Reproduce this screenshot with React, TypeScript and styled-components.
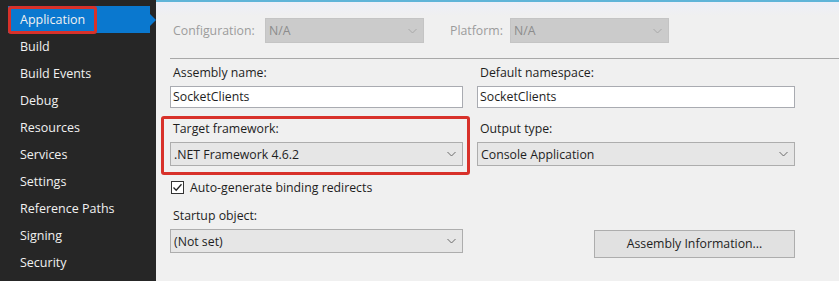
import React from "react";
import styled, { createGlobalStyle } from "styled-components";

const Global = createGlobalStyle`
  html, body { margin: 0; padding: 0; background: #f0f0f0; }
  body { font-family: "Open Sans", "Noto Sans", sans-serif; font-size: 12.3px; color: #1e1e1e; }
  * { box-sizing: border-box; }
`;

const Shell = styled.div`
  display: flex;
  width: 839px;
  height: 281px;
  overflow: hidden;
`;

const Sidebar = styled.nav`
  width: 156px;
  flex: none;
  background: #262626;
  padding: 6px 6px 0 8px;
  display: flex;
  flex-direction: column;
`;

const NavItem = styled.div<{ $active?: boolean }>`
  position: relative;
  height: 27px;
  line-height: 27px;
  padding-left: 12px;
  color: #f1f1f1;
  font-size: 12.5px;
  background: ${(p) => (p.$active ? "#0a78cf" : "transparent")};
  ${(p) =>
    p.$active &&
    `
    &::after {
      content: "";
      position: absolute;
      right: -6px;
      top: 8px;
      border-left: 6px solid #0a78cf;
      border-top: 6px solid transparent;
      border-bottom: 6px solid transparent;
    }
  `}
`;

const Highlight = styled.span<{ $w: number; $h: number; $t: number; $l: number }>`
  position: absolute;
  top: ${(p) => p.$t}px;
  left: ${(p) => p.$l}px;
  width: ${(p) => p.$w}px;
  height: ${(p) => p.$h}px;
  border: 3px solid #d8312a;
  border-radius: 3px;
  pointer-events: none;
`;

const Main = styled.main`
  flex: 1;
  border-top: 2px solid #5fb4d8;
  background: linear-gradient(#eceef8, #f0f0f0 14px);
  display: flex;
  flex-direction: column;
`;

const ConfigBar = styled.div`
  display: flex;
  align-items: center;
  padding: 16px 0 0 14px;
  height: 41px;
`;

const ConfigLabel = styled.span<{ $w: number; $ml?: number }>`
  width: ${(p) => p.$w}px;
  margin-left: ${(p) => p.$ml ?? 0}px;
  padding-left: 3px;
  color: #9c9c9c;
`;

const Separator = styled.div`
  margin: 15px 0 0 14px;
  height: 1px;
  background: #a8a8a8;
`;

const Form = styled.div`
  display: grid;
  grid-template-columns: 293px 318px;
  column-gap: 14px;
  row-gap: 13px;
  padding: 6px 0 0 14px;
`;

const Field = styled.div`
  position: relative;
  display: flex;
  flex-direction: column;
`;

const Label = styled.label`
  height: 16px;
  line-height: 16px;
  padding-left: 3px;
  margin-bottom: 5px;
  color: #1e1e1e;
`;

const TextInput = styled.div`
  height: 22px;
  line-height: 20px;
  background: #ffffff;
  border: 1px solid #a9abb1;
  padding-left: 2px;
`;

const SelectBox = styled.div<{ $disabled?: boolean; $w?: number }>`
  display: flex;
  align-items: center;
  justify-content: space-between;
  height: ${(p) => (p.$disabled ? 25 : 24)}px;
  width: ${(p) => (p.$w ? `${p.$w}px` : "auto")};
  padding: 0 6px 0 3px;
  background: ${(p) => (p.$disabled ? "#cbcbcb" : "#e6e6e6")};
  border: 1px solid ${(p) => (p.$disabled ? "#c4c4c4" : "#adadad")};
  color: ${(p) => (p.$disabled ? "#8c8c8c" : "#1e1e1e")};
`;

const CheckRow = styled.div`
  display: flex;
  align-items: center;
  height: 16px;
  padding-left: 1px;
  gap: 6px;
`;

const CheckBox = styled.span`
  width: 13px;
  height: 13px;
  border: 1px solid #333333;
  background: #ffffff;
  display: flex;
  align-items: center;
  justify-content: center;
`;

const ButtonCell = styled.div`
  display: flex;
  justify-content: flex-end;
  padding-top: 22px;
`;

const Button = styled.div`
  width: 201px;
  height: 28px;
  line-height: 26px;
  text-align: center;
  background: #e1e1e1;
  border: 1px solid #adadad;
`;

const Chevron = ({ color = "#6a6a6a" }: { color?: string }) => (
  <svg width="9" height="6" viewBox="0 0 9 6">
    <path d="M0.5 1 L4.5 5 L8.5 1" fill="none" stroke={color} strokeWidth="1" />
  </svg>
);

const Select = ({ value, disabled, w }: { value: string; disabled?: boolean; w?: number }) => (
  <SelectBox $disabled={disabled} $w={w}>
    <span>{value}</span>
    <Chevron color={disabled ? "#a8a8a8" : "#6a6a6a"} />
  </SelectBox>
);

const navItems = [
  "Application",
  "Build",
  "Build Events",
  "Debug",
  "Resources",
  "Services",
  "Settings",
  "Reference Paths",
  "Signing",
  "Security",
];

export default function App() {
  return (
    <>
      <Global />
      <Shell>
        <Sidebar>
          {navItems.map((n, i) => (
            <NavItem key={n} $active={i === 0}>
              {n}
              {i === 0 && <Highlight $t={0} $l={0} $w={89} $h={28} />}
            </NavItem>
          ))}
        </Sidebar>
        <Main>
          <ConfigBar>
            <ConfigLabel $w={95}>Configuration:</ConfigLabel>
            <Select value="N/A" disabled w={159} />
            <ConfigLabel $w={63} $ml={23}>Platform:</ConfigLabel>
            <Select value="N/A" disabled w={159} />
          </ConfigBar>
          <Separator />
          <Form>
            <Field>
              <Label>Assembly name:</Label>
              <TextInput>SocketClients</TextInput>
            </Field>
            <Field>
              <Label>Default namespace:</Label>
              <TextInput>SocketClients</TextInput>
            </Field>
            <Field>
              <Label>Target framework:</Label>
              <Select value=".NET Framework 4.6.2" />
              <Highlight $t={-5} $l={-9} $w={309} $h={59} />
            </Field>
            <Field>
              <Label>Output type:</Label>
              <Select value="Console Application" />
            </Field>
            <CheckRow>
              <CheckBox>
                <svg width="11" height="11" viewBox="0 0 11 11">
                  <path d="M1.5 5.5 L4.2 8.3 L9.5 2.2" fill="none" stroke="#222" strokeWidth="1.3" />
                </svg>
              </CheckBox>
              <span>Auto-generate binding redirects</span>
            </CheckRow>
            <div />
            <Field>
              <Label>Startup object:</Label>
              <Select value="(Not set)" />
            </Field>
            <ButtonCell>
              <Button>Assembly Information...</Button>
            </ButtonCell>
          </Form>
        </Main>
      </Shell>
    </>
  );
}
